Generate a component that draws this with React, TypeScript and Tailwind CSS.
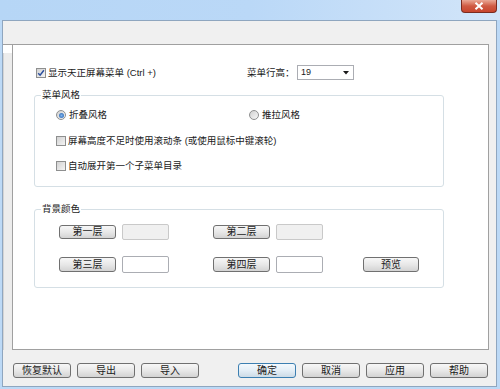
import React from 'react'

const font = "font-['Liberation_Sans','Noto_Sans_CJK_SC',sans-serif]"

function Button({ label, className = '', primary = false }: { label: string; className?: string; primary?: boolean }) {
  return (
    <div
      className={`flex shrink-0 items-center justify-center rounded-[3px] border text-[10px] leading-none text-[#1a1a1a] ${
        primary
          ? 'border-[#3c7fb1] bg-linear-to-b from-[#f4f9fd] via-[#e4eef6] to-[#cddbe6]'
          : 'border-[#707070] bg-linear-to-b from-[#f7f7f7] via-[#e8e8e8] to-[#d3d3d3]'
      } ${className}`}
    >
      {label}
    </div>
  )
}

function Check({ checked = false }: { checked?: boolean }) {
  return (
    <span className="flex h-[10px] w-[10px] shrink-0 items-center justify-center border border-[#8e8f8f] bg-white">
      <span className="flex h-[8px] w-[8px] items-center justify-center bg-linear-to-br from-[#d2d2d2] to-[#f4f4f4]">
        {checked && (
          <svg width="8" height="8" viewBox="0 0 8 8">
            <path d="M1.2 4.2 L3.1 6.2 L6.9 1.2" fill="none" stroke="#2b4f9e" strokeWidth="1.5" />
          </svg>
        )}
      </span>
    </span>
  )
}

function Radio({ checked = false }: { checked?: boolean }) {
  return (
    <span className="flex h-[10px] w-[10px] shrink-0 items-center justify-center rounded-full border border-[#8e8f8f] bg-linear-to-br from-[#d0d0d0] to-[#f8f8f8]">
      {checked && <span className="h-[5px] w-[5px] rounded-full bg-radial from-[#7fb3ec] to-[#1f5fae]" />}
    </span>
  )
}

function GroupBox({ title, className = '', children }: { title: string; className?: string; children: React.ReactNode }) {
  return (
    <div className={`relative ml-[21px] w-[410px] rounded-[3px] border border-[#d5dfe5] ${className}`}>
      <span className="absolute left-[6px] top-[-6px] bg-white px-[1px] text-[9.5px] leading-none text-[#1a1a1a]">{title}</span>
      {children}
    </div>
  )
}

export default function App() {
  return (
    <div className={`flex h-[389px] w-[500px] flex-col overflow-hidden bg-[#bcd9f6] ${font}`}>
      {/* Title bar */}
      <div className="flex h-[20px] shrink-0 items-start justify-end bg-linear-to-r from-[#b6d6f6] via-[#bad8f7] to-[#d2e5f9] pr-[3px]">
        <div className="flex h-[13px] w-[36px] items-center justify-center rounded-b-[4px] border border-t-0 border-[#7a2b1f] bg-linear-to-b from-[#e9a896] via-[#cf5a43] to-[#c8452d]">
          <svg width="10" height="8" viewBox="0 0 10 8">
            <path d="M1.5 0.8 L8.5 7.2 M8.5 0.8 L1.5 7.2" stroke="#ffffff" strokeWidth="2" />
          </svg>
        </div>
      </div>

      {/* Window frame */}
      <div className="mb-[2px] ml-[2px] mr-[3px] flex flex-1 flex-col border border-[#8fa6bf] bg-[#f0f0f0]">
        <div className="mt-[23px] flex">
          <div className="flex w-[9px] flex-col">
            <div className="h-[9px] border-t border-[#a0a0a0] bg-white" />
            <div className="flex-1 border-l border-[#d4d4d4] bg-[#ececec]" />
          </div>

          {/* Main panel */}
          <div className="h-[306px] w-[477px] border border-[#a0a0a0] bg-white text-[9.5px] leading-none text-[#1a1a1a]">
            <div className="mt-[20px] flex h-[15px] items-center pl-[23px]">
              <div className="flex w-[211px] items-center">
                <Check checked />
                <span className="ml-[2px]">显示天正屏幕菜单 (Ctrl +)</span>
              </div>
              <span className="w-[50px]">菜单行高：</span>
              <div className="flex h-[15px] w-[57px] items-center justify-between border border-[#abadb3] pl-[3px] pr-[4px] text-[9px]">
                <span>19</span>
                <svg width="6" height="4" viewBox="0 0 6 4">
                  <path d="M0 0 L6 0 L3 3.5 Z" fill="#1a1a1a" />
                </svg>
              </div>
            </div>

            <GroupBox title="菜单风格" className="mt-[15px] h-[92px]">
              <div className="flex flex-col pl-[21px]">
                <div className="mt-[13px] flex h-[12px] items-center">
                  <div className="flex w-[193px] items-center">
                    <Radio checked />
                    <span className="ml-[3px]">折叠风格</span>
                  </div>
                  <Radio />
                  <span className="ml-[3px]">推拉风格</span>
                </div>
                <div className="mt-[14px] flex h-[12px] items-center">
                  <Check />
                  <span className="ml-[2px]">屏幕高度不足时使用滚动条 (或使用鼠标中键滚轮)</span>
                </div>
                <div className="mt-[13px] flex h-[12px] items-center">
                  <Check />
                  <span className="ml-[2px]">自动展开第一个子菜单目录</span>
                </div>
              </div>
            </GroupBox>

            <GroupBox title="背景颜色" className="mt-[22px] h-[79px]">
              <div className="flex flex-col pl-[24px]">
                <div className="mt-[14px] flex h-[16px] items-center">
                  <Button label="第一层" className="h-[14px] w-[57px]" />
                  <div className="ml-[6px] h-[16px] w-[47px] rounded-[2px] border border-[#c9c9c9] bg-[#f0f0f0]" />
                  <Button label="第二层" className="ml-[44px] h-[14px] w-[57px]" />
                  <div className="ml-[6px] h-[16px] w-[47px] rounded-[2px] border border-[#c9c9c9] bg-[#f0f0f0]" />
                </div>
                <div className="mt-[16px] flex h-[17px] items-center">
                  <Button label="第三层" className="h-[15px] w-[57px]" />
                  <div className="ml-[6px] h-[17px] w-[47px] rounded-[2px] border border-[#abadb3] bg-white" />
                  <Button label="第四层" className="ml-[44px] h-[15px] w-[57px]" />
                  <div className="ml-[6px] h-[17px] w-[47px] rounded-[2px] border border-[#abadb3] bg-white" />
                  <Button label="预览" className="ml-[40px] h-[15px] w-[56px]" />
                </div>
              </div>
            </GroupBox>
          </div>
        </div>

        {/* Bottom buttons */}
        <div className="mt-[13px] flex h-[15px] pl-[10px] pr-[8px]">
          <div className="flex gap-[6px]">
            <Button label="恢复默认" className="h-[15px] w-[58px]" />
            <Button label="导出" className="h-[15px] w-[58px]" />
            <Button label="导入" className="h-[15px] w-[58px]" />
          </div>
          <div className="ml-auto flex gap-[6px]">
            <Button label="确定" primary className="h-[15px] w-[58px]" />
            <Button label="取消" className="h-[15px] w-[58px]" />
            <Button label="应用" className="h-[15px] w-[58px]" />
            <Button label="帮助" className="h-[15px] w-[58px]" />
          </div>
        </div>
      </div>
    </div>
  )
}
